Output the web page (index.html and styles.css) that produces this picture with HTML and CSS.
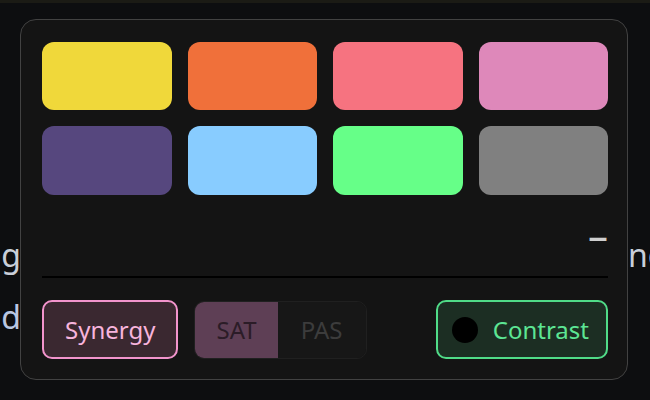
FILE: index.html
```html
<!DOCTYPE html>
<html lang="en">
<head>
<meta charset="utf-8">
<title>Palette</title>
<link rel="stylesheet" href="styles.css">
</head>
<body>
<div class="topbar"></div>
<main class="page">
  <div class="bg-line">
    <div class="bg-left"><span>Loading</span></div>
    <div class="bg-right"><span>ngs and more</span></div>
  </div>
  <div class="bg-line second">
    <div class="bg-left"><span>cloud</span></div>
  </div>
</main>

<section class="panel">
  <div class="swatches">
    <div class="swatch yellow"></div>
    <div class="swatch orange"></div>
    <div class="swatch coral"></div>
    <div class="swatch pink"></div>
    <div class="swatch purple"></div>
    <div class="swatch sky"></div>
    <div class="swatch green"></div>
    <div class="swatch gray"></div>
  </div>
  <div class="display"><span class="value">–</span></div>
  <div class="actions">
    <button class="btn synergy">Synergy</button>
    <div class="segment">
      <span class="seg active">SAT</span>
      <span class="seg">PAS</span>
    </div>
    <button class="btn contrast"><span class="dot"></span>Contrast</button>
  </div>
</section>
</body>
</html>
```

FILE: styles.css
```css
* { box-sizing: border-box; }
html, body { margin: 0; height: 100%; }
body {
  background: #0d0e10;
  font-family: "Noto Sans", "Open Sans", sans-serif;
  overflow: hidden;
  position: relative;
}
.topbar { height: 3px; background: #1b1b15; }
.page { padding-top: 232px; }
.bg-line {
  display: flex;
  justify-content: space-between;
  font-size: 32px;
  line-height: 40px;
  color: #c9cfd9;
  white-space: nowrap;
}
.bg-line.second { margin-top: 22px; color: #b9c6e2; }
.bg-left {
  width: 21px;
  overflow: hidden;
  display: flex;
  justify-content: flex-end;
}
.bg-right {
  width: 22px;
  overflow: hidden;
}
.panel {
  position: absolute;
  left: 20px;
  top: 19px;
  width: 608px;
  background: #141414;
  border: 1px solid #424242;
  border-radius: 16px;
  padding: 22px 19px 20px 21px;
}
.swatches {
  display: grid;
  grid-template-columns: repeat(4, 1fr);
  gap: 16px;
}
.swatch { height: 68px; border-radius: 12px; }
.swatches .swatch:nth-child(n+5) { height: 69px; }
.yellow { background: #f0d83a; }
.orange { background: #f0703a; }
.coral { background: #f67380; }
.pink { background: #de88ba; }
.purple { background: #56477e; }
.sky { background: #88ccff; }
.green { background: #66ff88; }
.gray { background: #808080; }
.display {
  height: 83px;
  border-bottom: 2px solid #000;
  display: flex;
  justify-content: flex-end;
  align-items: center;
}
.value {
  font-size: 40px;
  line-height: 40px;
  color: #cfcfcf;
  margin-top: -2px;
}
.actions {
  margin-top: 22px;
  display: flex;
  align-items: center;
  gap: 16px;
}
.btn {
  height: 59px;
  border-radius: 10px;
  font-family: inherit;
  font-size: 24px;
  display: flex;
  align-items: center;
  padding: 0 21px;
  cursor: pointer;
}
.synergy {
  background: #3a2830;
  border: 2px solid #f294cc;
  color: #f7b4dc;
}
.segment {
  display: flex;
  height: 58px;
  border: 1px solid #202020;
  border-radius: 10px;
  overflow: hidden;
}
.seg {
  display: flex;
  align-items: center;
  padding: 0 21px;
  font-size: 24px;
  color: #3c3c3c;
  background: #171717;
}
.seg.active { background: #5e3f55; color: #2b1c27; }
.seg + .seg { padding: 0 23px; }
.contrast {
  margin-left: auto;
  background: #1c2e23;
  border: 2px solid #50dc88;
  color: #5ce594;
  padding: 0 17px 0 14px;
  gap: 15px;
}
.dot {
  width: 26px;
  height: 26px;
  border-radius: 50%;
  background: #000;
}
```
